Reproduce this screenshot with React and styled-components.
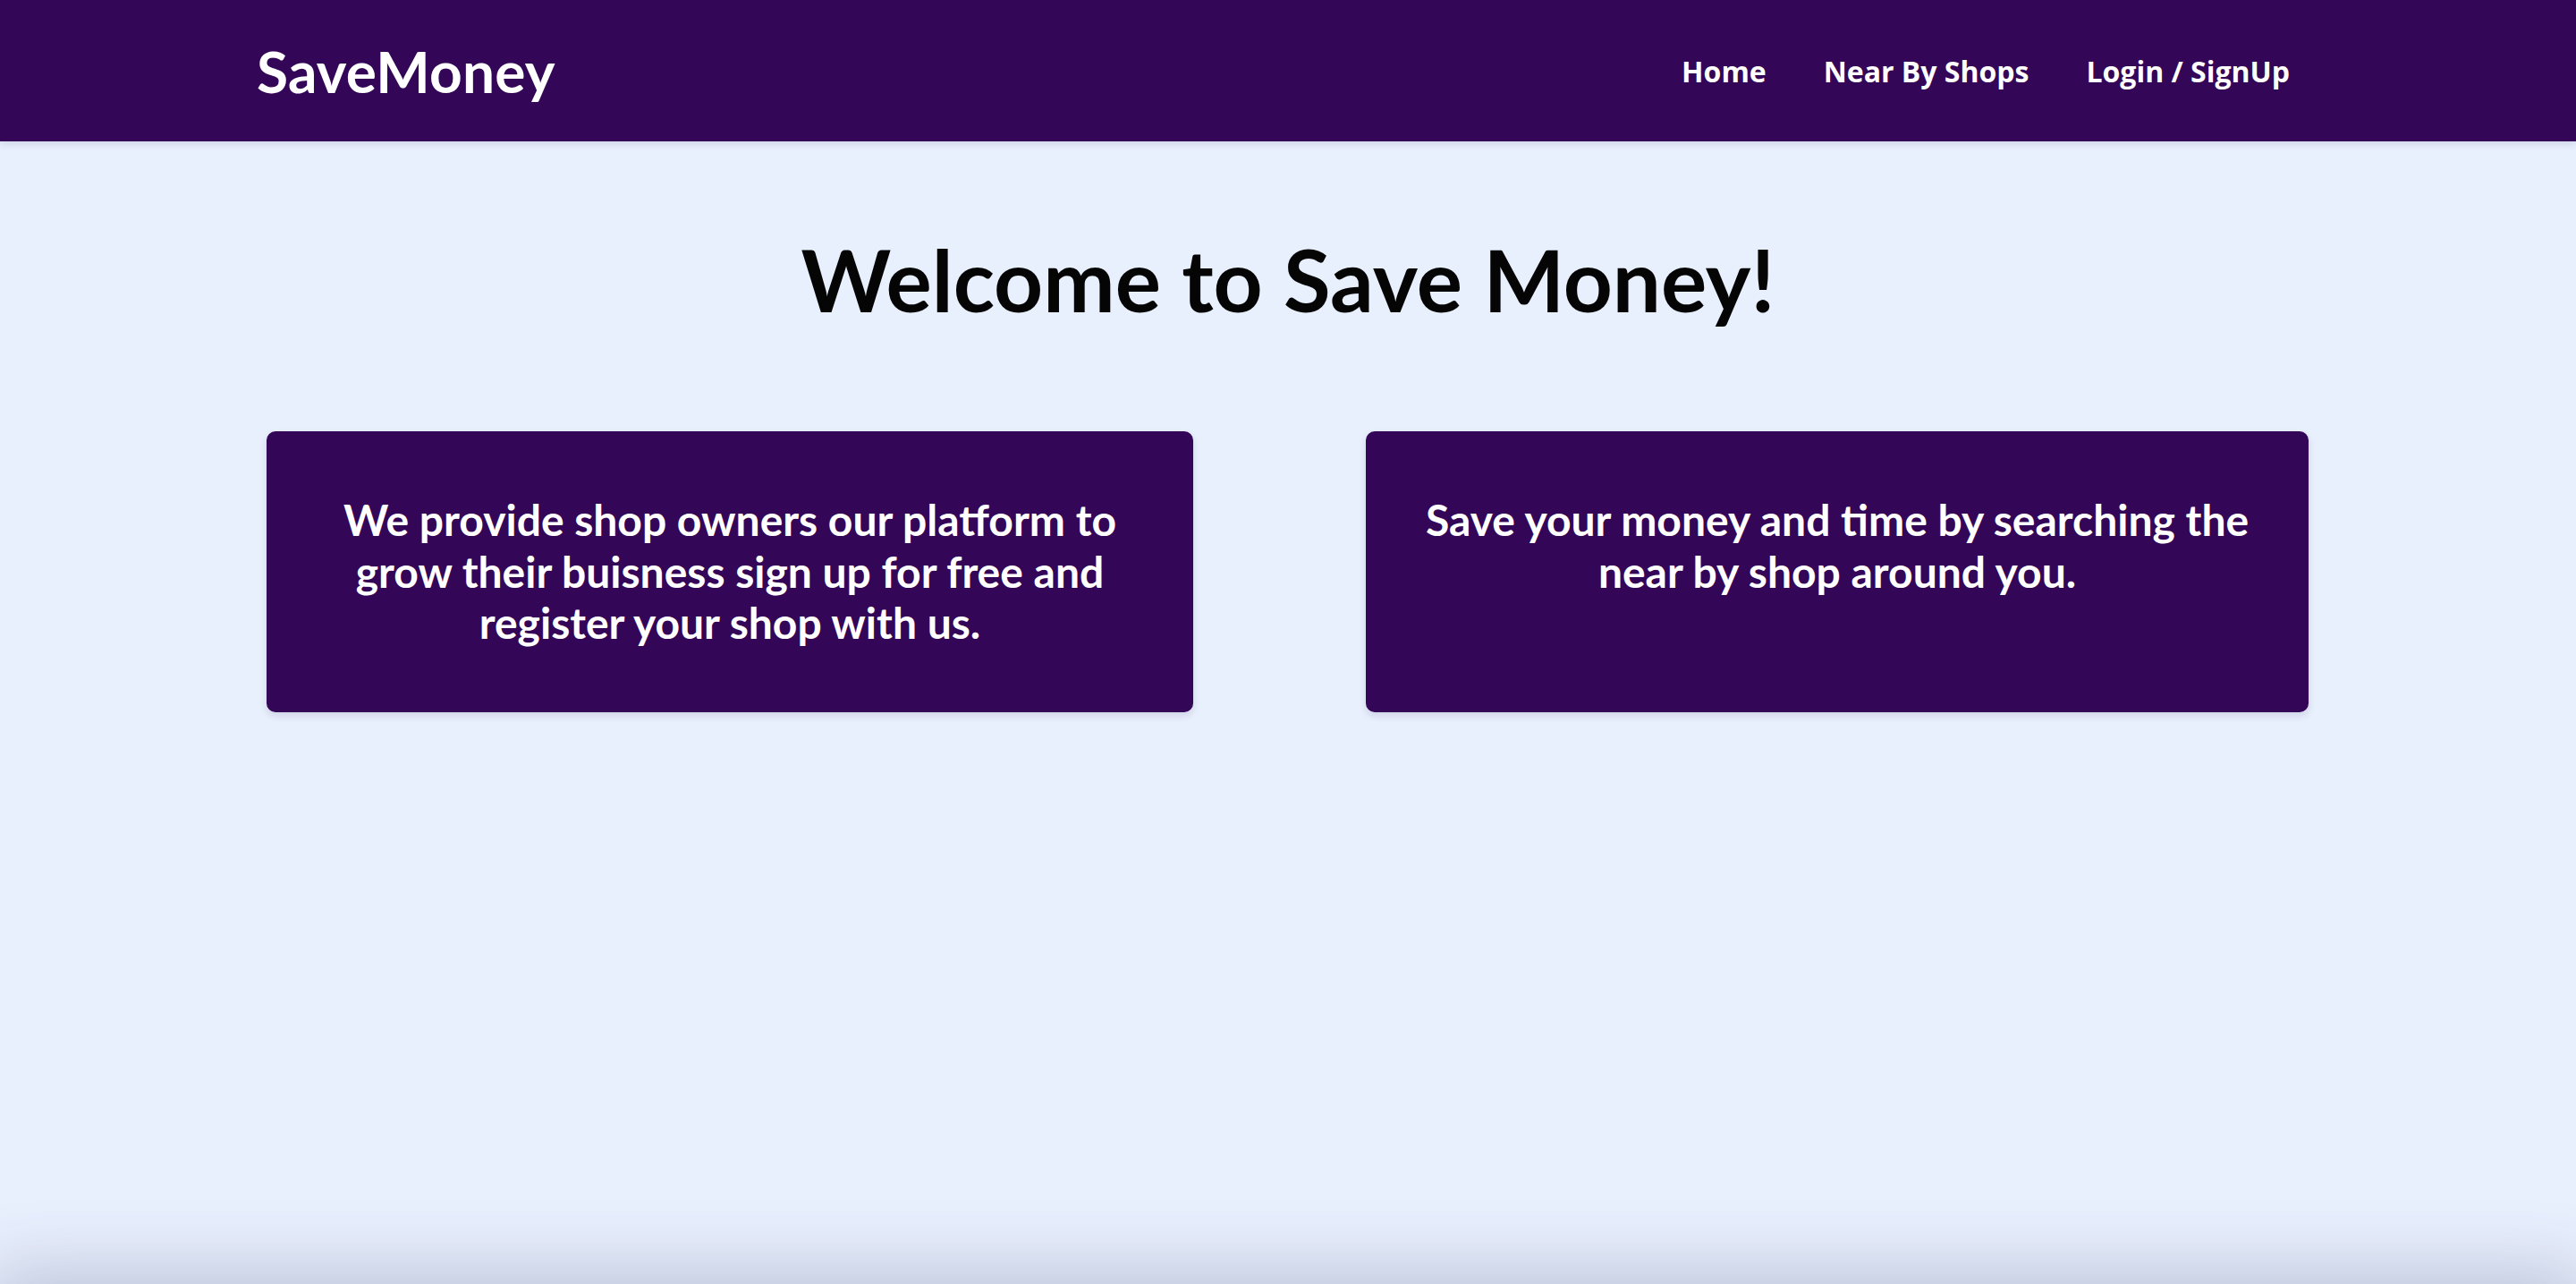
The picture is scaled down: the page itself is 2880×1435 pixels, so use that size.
import React from "react";
import styled, { createGlobalStyle } from "styled-components";

const Global = createGlobalStyle`
  html, body { margin: 0; padding: 0; }
  body { background: #e8effd; font-family: Lato, "Open Sans", sans-serif; }
  * { box-sizing: border-box; }
`;

const Page = styled.div`
  height: 100vh;
  overflow: hidden;
  display: flex;
  flex-direction: column;
  background: #e8effd;
`;

const NavBar = styled.header`
  flex: 0 0 158px;
  height: 158px;
  background: #330657;
  display: flex;
  align-items: center;
  justify-content: space-between;
  padding: 0 320px 0 287px;
  box-shadow: 0 3px 8px rgba(40, 30, 80, 0.12);
  position: relative;
  z-index: 2;
`;

const Logo = styled.div`
  font-family: Lato, sans-serif;
  font-weight: 700;
  font-size: 64px;
  color: #ffffff;
  letter-spacing: 0.2px;
`;

const Links = styled.nav`
  display: flex;
  gap: 64px;
`;

const NavLink = styled.a`
  font-family: "Open Sans", sans-serif;
  font-weight: 700;
  font-size: 32px;
  color: #ffffff;
  text-decoration: none;
  cursor: pointer;
`;

const Main = styled.main`
  flex: 1 0 auto;
  min-height: calc(100vh - 158px);
  padding-top: 96px;
`;

const Title = styled.h1`
  margin: 0;
  text-align: center;
  font-family: Lato, sans-serif;
  font-weight: 700;
  font-size: 96px;
  color: #050505;
`;

const Cards = styled.section`
  margin-top: 113px;
  padding: 0 299px 0 298px;
  display: grid;
  grid-template-columns: 1036px 1054px;
  justify-content: space-between;
`;

const Card = styled.div`
  background: #330657;
  border-radius: 10px;
  padding: 70px 48px;
  min-height: 314px;
  box-shadow: 0 4px 8px rgba(30, 20, 70, 0.12);
`;

const CardText = styled.h3`
  margin: 0;
  text-align: center;
  font-family: Lato, sans-serif;
  font-weight: 700;
  font-size: 48px;
  line-height: 1.2;
  color: #ffffff;
`;

const Footer = styled.footer`
  flex: 0 0 80px;
  background: #e8effd;
  box-shadow: 0 0 80px 10px rgba(60, 70, 110, 0.28);
`;

export default function App() {
  return (
    <>
      <Global />
      <Page>
        <NavBar>
          <Logo>SaveMoney</Logo>
          <Links>
            <NavLink>Home</NavLink>
            <NavLink>Near By Shops</NavLink>
            <NavLink>Login / SignUp</NavLink>
          </Links>
        </NavBar>
        <Main>
          <Title>Welcome to Save Money!</Title>
          <Cards>
            <Card>
              <CardText>
                We provide shop owners our platform to grow their buisness sign
                up for free and register your shop with us.
              </CardText>
            </Card>
            <Card>
              <CardText>
                Save your money and time by searching the near by shop around
                you.
              </CardText>
            </Card>
          </Cards>
        </Main>
        <Footer />
      </Page>
    </>
  );
}
